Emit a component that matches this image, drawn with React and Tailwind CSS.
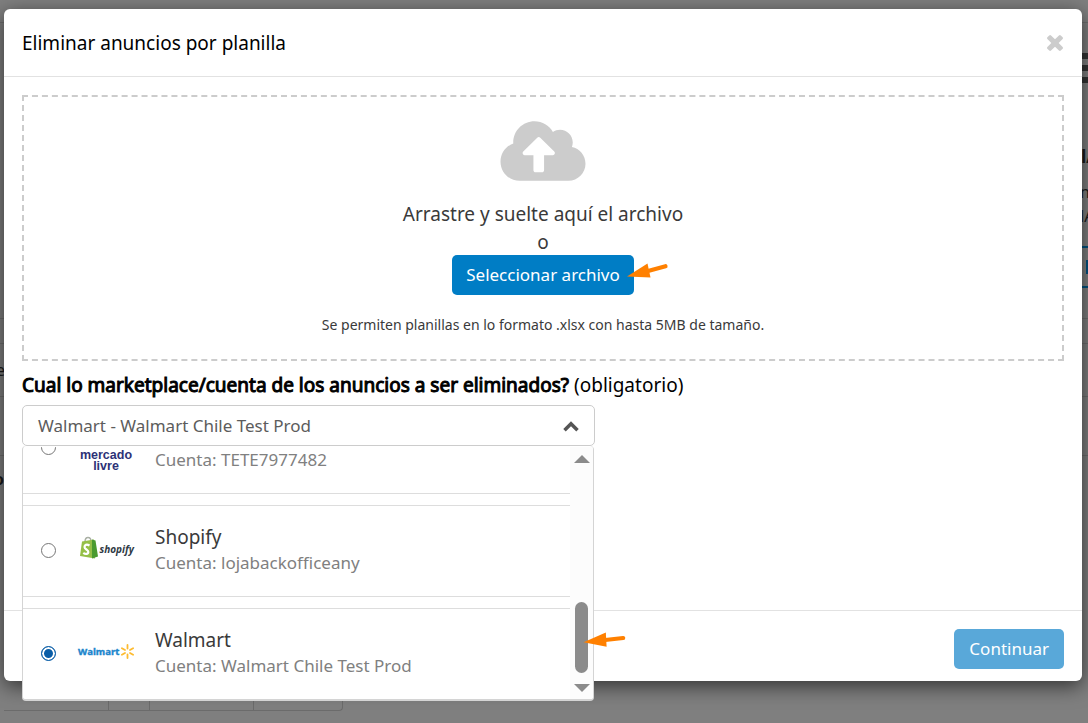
import { useState } from "react";
import { FaCloudUploadAlt } from "react-icons/fa";

const accounts = [
  { id: "ml", name: "Mercado Livre", account: "TETE7977482", Logo: MercadoLivreLogo },
  { id: "shopify", name: "Shopify", account: "lojabackofficeany", Logo: ShopifyLogo },
  { id: "walmart", name: "Walmart", account: "Walmart Chile Test Prod", Logo: WalmartLogo },
];

function MercadoLivreLogo() {
  return (
    <svg viewBox="0 0 58 58" className="size-[58px]" role="img" aria-label="Mercado Livre">
      <ellipse cx="29" cy="15" rx="18" ry="12" fill="#ffe600" stroke="#2d3277" strokeWidth="1.5" />
      <g fill="#2d3277" fontFamily="Liberation Sans, sans-serif" fontWeight="700" fontSize="12.5" textAnchor="middle">
        <text x="29" y="41">mercado</text>
        <text x="29" y="51.500">livre</text>
      </g>
    </svg>
  );
}

function ShopifyLogo() {
  return (
    <svg viewBox="0 0 58 58" className="size-[58px]" role="img" aria-label="Shopify">
      <path d="M8 21C8 17.500 10 16.500 11 16.500c2 0 3 2 3 4" fill="none" stroke="#a9b0a4" strokeWidth="1.5" />
      <path d="M5 20.500 17 18.500 18 37.500 3 35z" fill="#95bf47" />
      <path d="M15 18.500 18.500 19.500 21 35.500 15 37.500z" fill="#4a9a2f" />
      <path d="M12.500 24.500C9.500 22.800 7.500 24 7.500 26c0 2.500 3.800 2.500 3.800 5 0 2.300-3 2.500-5 .8" fill="none" stroke="#fff" strokeWidth="2.200" />
      <text x="22.500" y="31.500" fill="#2f3a45" fontFamily="Open Sans, sans-serif" fontStyle="italic" fontWeight="700" fontSize="10">shopify</text>
    </svg>
  );
}

function WalmartLogo() {
  return (
    <svg viewBox="0 0 58 58" className="size-[58px]" role="img" aria-label="Walmart">
      <text x="1" y="30.500" fill="#1a85cc" stroke="#1a85cc" strokeWidth="0.400" fontFamily="Open Sans, sans-serif" fontWeight="700" fontSize="9.500">Walmart</text>
      <path
        d="M50.500 24.500V21M50.500 30.500V34M48 26 44.900 24.200M53 26 56.100 24.200M48 29 44.900 30.800M53 29 56.100 30.800"
        stroke="#fdbb30"
        strokeWidth="1.800"
        strokeLinecap="round"
      />
    </svg>
  );
}

function PointerArrow({ className }) {
  return (
    <svg viewBox="0 0 44 18" className={className} aria-hidden="true">
      <path d="M1 13.500 21.500 0.500 24.500 14.500z" fill="#ff8000" />
      <path d="M22 8 39.500 3.200" stroke="#ff8000" strokeWidth="4.200" strokeLinecap="round" />
    </svg>
  );
}

function Backdrop() {
  return (
    <div aria-hidden="true" className="absolute inset-0 flex flex-col overflow-hidden bg-[#7f7f7f] text-[#1b1b1b]">
      <div className="h-[23px] shrink-0 border-b border-[#6e6e6e]" />
      <div className="flex flex-1 flex-col items-end pt-[30px]">
        <div className="flex w-2 flex-col gap-[6px]">
          <div className="h-[6px] bg-[#333]" />
          <div className="h-[6px] bg-[#333]" />
          <div className="h-[6px] bg-[#333]" />
        </div>
        <div className="mt-[61px] w-[7px] overflow-hidden text-lg leading-6 font-bold">lA</div>
        <div className="mt-3 w-2 overflow-hidden text-base leading-6">n</div>
        <div className="w-2 overflow-hidden text-base leading-6">lA</div>
        <div className="mt-[18px] flex h-[42px] w-2 items-center justify-end border-y-2 border-[#00507f]">
          <div className="h-[14px] w-[2px] bg-[#00507f]" />
        </div>
        <div className="mt-[30px] h-[26px] w-full border-y border-[#6e6e6e]" />
        <div className="h-[53px] w-full border-b border-[#6e6e6e] text-base leading-[52px]">
          <span className="-ml-1">e</span>
        </div>
        <div className="h-[59px] w-full border-b border-[#6e6e6e]" />
        <div className="h-[46px] w-full text-base leading-[46px] font-bold">
          <span className="-ml-[6px]">o</span>
        </div>
      </div>
      <div className="mb-3 ml-1 flex h-[60px] w-[339px] shrink-0 rounded-br border-r border-b border-[#6b6b6b]">
        <div className="w-[105px] border-r border-[#6b6b6b]" />
        <div className="w-[41px] border-r border-[#6b6b6b]" />
        <div className="w-[104px] border-r border-[#6b6b6b]" />
      </div>
    </div>
  );
}

export default function App() {
  const [selected, setSelected] = useState("walmart");
  const current = accounts.find((a) => a.id === selected);

  return (
    <div className="relative min-h-screen pt-[9px] pr-[6px] pb-[41px] pl-1 font-['Noto_Sans',sans-serif] text-black">
      <Backdrop />
      <section role="dialog" aria-labelledby="dialog-title" className="relative rounded-md bg-white shadow-[0_5px_20px_rgba(0,0,0,0.6)]">
        <header className="flex h-[68px] items-center justify-between border-b border-[#e2e2e2] px-[18px]">
          <h1 id="dialog-title" className="text-[19px] leading-7">Eliminar anuncios por planilla</h1>
          <button type="button" aria-label="Cerrar" className="pr-[1px]">
            <svg viewBox="302 366 1188 1188" className="size-4" fill="#ccc" aria-hidden="true">
              <path d="M1490 1322q0 40-28 68l-136 136q-28 28-68 28t-68-28l-294-294-294 294q-28 28-68 28t-68-28l-136-136q-28-28-28-68t28-68l294-294-294-294q-28-28-28-68t28-68l136-136q28-28 68-28t68 28l294 294 294-294q28-28 68-28t68 28l136 136q28 28 28 68t-28 68l-294 294 294 294q28 28 28 68z" />
            </svg>
          </button>
        </header>

        <div className="px-[18px] pt-[18px]">
          <div className="flex h-[266px] flex-col items-center border-2 border-dashed border-[#ccc] pt-5 text-[#3a3a3a]">
            <FaCloudUploadAlt className="h-[68px] w-[86px] text-[#ccc]" aria-hidden="true" />
            <p className="mt-[15px] text-[19px] leading-7">Arrastre y suelte aquí el archivo</p>
            <p className="text-[19px] leading-7">o</p>
            <div className="relative -mt-px">
              <button type="button" className="h-10 rounded-[5px] bg-[#007dc5] px-[14px] text-[17px] text-white">
                Seleccionar archivo
              </button>
              <PointerArrow className="absolute top-2 left-full -ml-2 h-[18px] w-11" />
            </div>
            <p className="mt-5 text-sm leading-5">Se permiten planillas en lo formato .xlsx con hasta 5MB de tamaño.</p>
          </div>

          <p id="account-label" className="mt-[10px] text-[19px] leading-7">
            <strong className="font-normal [-webkit-text-stroke:1px_black]">Cual lo marketplace/cuenta de los anuncios a ser eliminados?</strong> (obligatorio)
          </p>

          <div className="relative mt-[6px] mb-[164px] w-[573px] max-w-full">
            <button
              type="button"
              aria-expanded="true"
              aria-labelledby="account-label account-value"
              className="flex h-[41px] w-full items-center justify-between rounded-[5px] border border-[#ccc] px-[15px] text-[17px] text-[#5c5c5c]"
            >
              <span id="account-value">{current.name} - {current.account}</span>
              <svg viewBox="0 0 16 12" className="h-3 w-4" fill="none" stroke="#555" strokeWidth="3.5" aria-hidden="true">
                <path d="M1.500 10.200 8 3.700 14.500 10.200" />
              </svg>
            </button>

            <div className="absolute top-full left-0 z-10 flex h-[255px] w-[572px] overflow-hidden rounded border-x border-b-2 border-[#d4d4d4] bg-white pt-px">
              <div className="flex flex-1 flex-col justify-end gap-[11px] overflow-hidden">
                {accounts.map(({ id, name, account, Logo }) => (
                  <label key={id} className="flex h-[92px] shrink-0 items-center border-y border-[#ddd] pb-[2px] pl-[18px] last:h-[91px] last:border-b-0">
                    <input
                      type="radio"
                      name="account"
                      value={id}
                      checked={selected === id}
                      onChange={() => setSelected(id)}
                      className="size-[15px] appearance-none rounded-full border border-[#767676] bg-white checked:border-[#0a5ea8] checked:bg-[#0a5ea8] checked:shadow-[inset_0_0_0_2px_#fff]"
                    />
                    <span className="ml-[21px]"><Logo /></span>
                    <span className="ml-5 flex flex-col">
                      <span className="text-[19px] leading-[25px] text-[#3a3a3a]">{name}</span>
                      <span className="text-[17px] leading-[25px] text-[#808080]">Cuenta: {account}</span>
                    </span>
                  </label>
                ))}
              </div>
              <div aria-hidden="true" className="flex w-[23px] flex-col items-center bg-[#fcfcfc] pt-2 pb-[7px]">
                <svg viewBox="0 0 16 8" className="h-2 w-4" fill="#8b8b8b"><path d="M0 8 8 0 16 8z" /></svg>
                <div className="mt-auto h-[71px] w-[13px] rounded-full bg-[#8b8b8b]" />
                <svg viewBox="0 0 16 8" className="mt-[11px] h-2 w-4" fill="#8b8b8b"><path d="M0 0 8 8 16 0z" /></svg>
              </div>
            </div>
            <PointerArrow className="absolute top-[227px] left-full z-20 -ml-3 h-[18px] w-11 rotate-[9deg]" />
          </div>
        </div>

        <footer className="flex justify-end border-t border-[#e2e2e2] px-[18px] pt-[18px] pb-3">
          <button type="button" className="h-10 rounded-[5px] bg-[#59a8d9] px-[15px] text-[17px] text-white">
            Continuar
          </button>
        </footer>
      </section>
    </div>
  );
}
